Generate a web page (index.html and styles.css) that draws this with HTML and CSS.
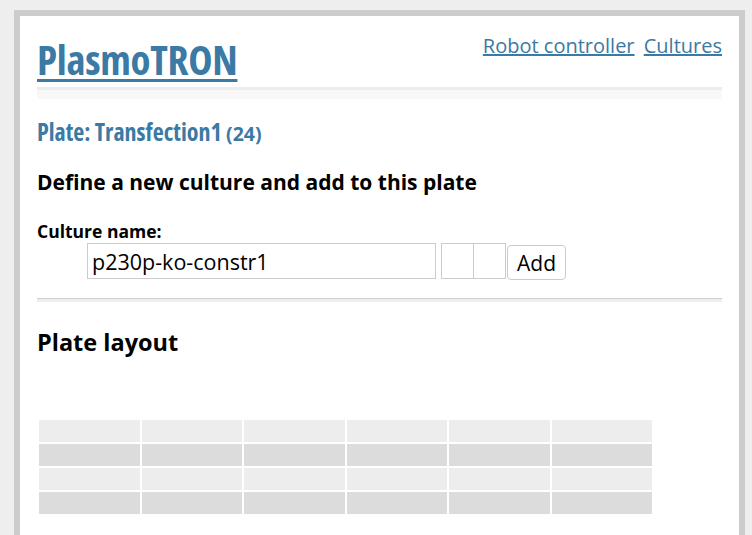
FILE: index.html
```html
<!DOCTYPE html>
<html>
<head>
<meta charset="utf-8">
<link rel="stylesheet" href="styles.css">
</head>
<body>
<div class="page">
  <header class="header">
    <h1 class="title"><a href="#">PlasmoTRON</a></h1>
    <nav class="nav"><a href="#">Robot controller</a> <a href="#">Cultures</a></nav>
  </header>
  <div class="rule"></div>
  <h2 class="plate-title">Plate: Transfection1 <span class="count">(24)</span></h2>
  <h3 class="section-title">Define a new culture and add to this plate</h3>
  <form class="culture-form">
    <label class="label">Culture name:</label>
    <div class="inputs">
      <input class="name-input" type="text" value="p230p-ko-constr1">
      <span class="small-inputs"><input class="small-input" type="text"><input class="small-input" type="text"></span><button class="add-btn" type="button">Add</button>
    </div>
  </form>
  <div class="sep"></div>
  <h3 class="layout-title">Plate layout</h3>
  <table class="plate">
    <tr class="r1"><td></td><td></td><td></td><td></td><td></td><td></td></tr>
    <tr class="r2"><td></td><td></td><td></td><td></td><td></td><td></td></tr>
    <tr class="r1"><td></td><td></td><td></td><td></td><td></td><td></td></tr>
    <tr class="r2"><td></td><td></td><td></td><td></td><td></td><td></td></tr>
  </table>
</div>
</body>
</html>
```
FILE: styles.css
```css
html, body {
  margin: 0;
  padding: 0;
}
body {
  background: #eeeeee;
  padding: 10px 7px 0 14px;
  font-family: "Open Sans", "DejaVu Sans", sans-serif;
  color: #000;
}
.page {
  background: #fff;
  border: 6px solid #cccccc;
  border-bottom: none;
  padding: 16px 17px 40px 17px;
  min-height: 520px;
}
a {
  color: #3a7aa4;
}
.header {
  display: flex;
  justify-content: space-between;
  align-items: flex-start;
}
.title {
  margin: 0;
  font-family: "Open Sans", sans-serif;
  font-stretch: 75%;
  font-weight: 700;
  font-size: 41px;
  line-height: 54px;
  letter-spacing: -0.3px;
}
.title a {
  text-decoration-thickness: 3px;
  text-underline-offset: 4px;
}
.nav {
  font-size: 20px;
  line-height: 26px;
  margin-top: 1px;
}
.nav a {
  margin-left: 4px;
}
.rule {
  margin-top: 1px;
  border-top: 3px solid #ececec;
  height: 9px;
  background: #f8f8f8;
}
.plate-title {
  margin: 18px 0 0 0;
  font-family: "Open Sans", sans-serif;
  font-stretch: 75%;
  font-weight: 700;
  font-size: 24px;
  line-height: 30px;
  color: #3a7aa4;
}
.count {
  font-stretch: 100%;
  font-size: 19.5px;
}
.section-title {
  margin: 19px 0 0 0;
  font-size: 21px;
  font-weight: 700;
  line-height: 28px;
}
.culture-form {
  margin-top: 24px;
}
.label {
  display: block;
  font-size: 17.5px;
  font-weight: 700;
  line-height: 22px;
}
.inputs {
  display: flex;
  align-items: flex-start;
  margin-left: 50px;
  margin-top: 1px;
}
.name-input {
  width: 349px;
  height: 36px;
  box-sizing: border-box;
  border: 1px solid #cccccc;
  padding: 0 4px;
  font-family: "Open Sans", sans-serif;
  font-size: 21.5px;
  color: #000;
  outline: none;
  margin: 0;
}
.small-inputs {
  display: flex;
  margin-left: 5px;
}
.small-input {
  width: 33px;
  height: 36px;
  box-sizing: border-box;
  border: 1px solid #cccccc;
  margin: 0;
  padding: 0;
}
.small-input + .small-input {
  margin-left: -1px;
}
.add-btn {
  margin: 2px 0 0 1px;
  height: 35px;
  width: 59px;
  box-sizing: border-box;
  background: #fff;
  border: 1px solid #cccccc;
  border-radius: 4px;
  font-family: "Open Sans", sans-serif;
  font-size: 21px;
  color: #000;
  padding: 0;
}
.sep {
  margin-top: 18px;
  border-top: 1px solid #cfcfcf;
  height: 3px;
  background: #eeeeee;
}
.layout-title {
  margin: 24px 0 0 0;
  font-size: 23.5px;
  font-weight: 700;
  line-height: 32px;
}
.plate {
  margin-top: 60px;
  border-spacing: 2px;
  width: 617px;
}
.plate td {
  height: 22px;
  padding: 0;
}
.r1 td {
  background: #ededed;
}
.r2 td {
  background: #dcdcdc;
}
```
